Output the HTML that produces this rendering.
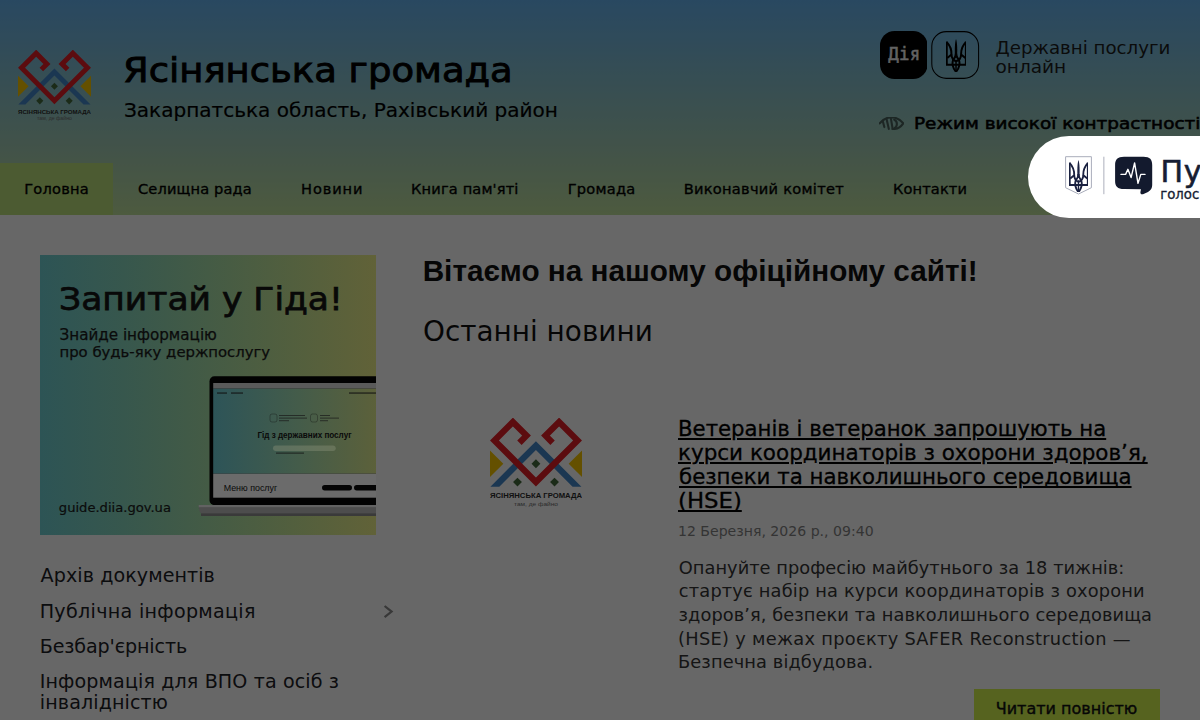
<!DOCTYPE html>
<html lang="uk">
<head>
<meta charset="utf-8">
<title>Ясінянська громада</title>
<style>
*{box-sizing:border-box;margin:0;padding:0}
html,body{width:1200px;height:720px;overflow:hidden;background:#fff}
body{font-family:"DejaVu Sans","Liberation Sans",sans-serif;color:#000;position:relative}
.t{position:absolute;white-space:nowrap}
.a{position:absolute}
#header{left:0;top:0;width:1200px;height:215px;background:linear-gradient(180deg,#66b3ef 0%,#85c0d0 35%,#a4cdb4 70%,#bfe09c 100%)}
#nav-active{left:0;top:163px;width:113px;height:52px;background:#bde27c}
#overlay{left:0;top:0;width:1200px;height:720px;background:rgba(0,0,0,.595);z-index:50}
#pulse{left:1027.5px;top:136px;width:200px;height:82px;border-radius:41px 0 0 41px;background:#fff;z-index:60}
#banner{left:40px;top:255px;width:336px;height:279.5px;background:linear-gradient(90deg,rgb(45,84,85) 0%,rgb(55,87,77) 25%,rgb(68,91,69) 50%,rgb(82,95,62) 75%,rgb(97,98,56) 100%);overflow:hidden;z-index:55}
#btn{left:974px;top:689px;width:186px;height:40px;background:#d4f64e}
.u{text-decoration:underline;text-decoration-thickness:1.7px;text-underline-offset:1.6px}
</style>
</head>
<body>
<svg width="0" height="0" style="position:absolute"><symbol id="tryzub" viewBox="128 85 352 565">
<g fill="none" stroke="currentColor" stroke-width="34" stroke-linejoin="miter" stroke-linecap="butt">
<path d="M141,128 L141,524 L469,524 L469,128"/>
<path d="M141,140 C190,190 226,270 222,352 L150,410"/>
<path d="M469,140 C420,190 384,270 388,352 L460,410"/>
<path d="M222,352 C226,420 258,452 300,468"/>
<path d="M388,352 C384,420 352,452 300,468"/>
<path d="M300,330 C296,388 272,412 250,446 C228,500 244,590 300,646"/>
<path d="M300,330 C304,388 328,412 350,446 C372,500 356,590 300,646"/>
<path d="M300,440 L300,640" stroke-width="26"/>
</g>
<path fill="currentColor" d="M300,85 C278,150 276,260 282,400 L318,400 C324,260 322,150 300,85 Z"/>
</symbol><symbol id="logo" viewBox="0 0 663 645">
<polygon fill="#4488cc" points="331,167 3,495 67,495 331,231 595,495 659,495"/>
<polygon fill="#f7c600" points="0,235 0,425 96,330"/>
<polygon fill="#f7c600" points="663,235 663,425 567,330"/>
<g fill="#446b3c">
<polygon points="331,298 363,330 331,362 299,330"/>
<polygon points="198,430 230,462 198,494 166,462"/>
<polygon points="465,430 497,462 465,494 433,462"/>
</g>
<g fill="none" stroke="#e31e25" stroke-width="45" stroke-linejoin="miter" stroke-miterlimit="4">
<path d="M212,178 L263,127 L165,29 L32,162 L331,461 L631,162 L498,29 L400,127 L451,178"/>
</g>
<text x="331.5" y="580" font-family="Liberation Sans, DejaVu Sans, sans-serif" font-weight="bold" font-size="50" text-anchor="middle" textLength="663" lengthAdjust="spacingAndGlyphs" fill="#2c2c2c">ЯСІНЯНСЬКА ГРОМАДА</text>
<text x="331.5" y="633" font-family="Liberation Sans, DejaVu Sans, sans-serif" font-size="42" text-anchor="middle" textLength="317" lengthAdjust="spacingAndGlyphs" fill="#6e6e6e">там, де файно</text>
</symbol></svg>
<div class="a" id="header"></div>
<div class="a" id="nav-active"></div>
<svg class="a" style="left:18.3px;top:49.9px" width="73" height="71" viewBox="0 0 663 645"><use href="#logo"/></svg>
<div class="t " style="left:123.30px;top:48.23px;font-family:'DejaVu Sans','Liberation Sans',sans-serif;font-size:34.60px;line-height:45px;color:#000;-webkit-text-stroke:0.9px #000;transform-origin:0 0;transform:scaleX(1.0684);">Ясінянська громада</div>
<div class="t " style="left:123.95px;top:97.16px;font-family:'DejaVu Sans','Liberation Sans',sans-serif;font-size:20.05px;line-height:26px;color:#000;-webkit-text-stroke:0.2px #000;">Закарпатська область, Рахівський район</div>
<div class="t nav" style="left:24.23px;top:178.95px;font-family:'DejaVu Sans','Liberation Sans',sans-serif;font-size:14.60px;line-height:19px;color:#000;letter-spacing:0.225px;-webkit-text-stroke:0.35px #000;">Головна</div>
<div class="t nav" style="left:137.92px;top:178.95px;font-family:'DejaVu Sans','Liberation Sans',sans-serif;font-size:14.60px;line-height:19px;color:#000;letter-spacing:0.165px;-webkit-text-stroke:0.35px #000;">Селищна рада</div>
<div class="t nav" style="left:301.10px;top:178.95px;font-family:'DejaVu Sans','Liberation Sans',sans-serif;font-size:14.60px;line-height:19px;color:#000;letter-spacing:0.854px;-webkit-text-stroke:0.35px #000;">Новини</div>
<div class="t nav" style="left:411.10px;top:178.95px;font-family:'DejaVu Sans','Liberation Sans',sans-serif;font-size:14.60px;line-height:19px;color:#000;letter-spacing:0.151px;-webkit-text-stroke:0.35px #000;">Книга пам'яті</div>
<div class="t nav" style="left:567.69px;top:178.95px;font-family:'DejaVu Sans','Liberation Sans',sans-serif;font-size:14.60px;line-height:19px;color:#000;letter-spacing:0.235px;-webkit-text-stroke:0.35px #000;">Громада</div>
<div class="t nav" style="left:683.69px;top:178.95px;font-family:'DejaVu Sans','Liberation Sans',sans-serif;font-size:14.60px;line-height:19px;color:#000;letter-spacing:0.275px;-webkit-text-stroke:0.35px #000;">Виконавчий комітет</div>
<div class="t nav" style="left:893.10px;top:178.95px;font-family:'DejaVu Sans','Liberation Sans',sans-serif;font-size:14.60px;line-height:19px;color:#000;letter-spacing:0.103px;-webkit-text-stroke:0.35px #000;">Контакти</div>
<svg class="a" style="left:879.8px;top:30.8px" width="47.6" height="48" viewBox="0 0 47.6 48"><rect x="0" y="0" width="47.6" height="48" rx="14.5" ry="14.5" fill="#000"/></svg>
<div class="t " style="left:888.24px;top:42.68px;font-family:'DejaVu Sans Mono','Liberation Mono',monospace;font-size:17.40px;line-height:23px;color:#f4f4f4;letter-spacing:0.267px;-webkit-text-stroke:0.45px #f4f4f4;">Дія</div>
<svg class="a" style="left:931.4px;top:30.8px" width="48.4" height="48" viewBox="0 0 48.4 48"><rect x="0.8" y="0.6" width="46.8" height="46.8" rx="14.5" ry="14.5" fill="none" stroke="#000" stroke-width="1.05"/></svg>
<svg class="a" style="left:945.5px;top:39px;color:#000" width="20.5" height="33" viewBox="0 0 352 565" preserveAspectRatio="none"><use href="#tryzub" width="352" height="565"/></svg>
<div class="t " style="left:995.57px;top:35.80px;font-family:'DejaVu Sans','Liberation Sans',sans-serif;font-size:18.22px;line-height:24px;color:#1c1c1c;">Державні послуги</div>
<div class="t " style="left:995.53px;top:55.29px;font-family:'DejaVu Sans','Liberation Sans',sans-serif;font-size:18.51px;line-height:24px;color:#1c1c1c;">онлайн</div>
<svg class="a" style="left:879.04px;top:117.04px" width="24.91" height="12.82" viewBox="195 195 690 355">
<g fill="none" stroke="#000" opacity=".52" stroke-width="58" stroke-linecap="round">
<path d="M215,372 C380,150 700,150 868,372 C800,470 680,535 570,528"/>
<path d="M300,310 L343,475"/><path d="M407,262 L468,525"/><path d="M527,245 L573,528"/>
<path d="M615,270 C715,305 715,465 615,510"/>
</g></svg>
<div class="t " style="left:913.99px;top:113.39px;font-family:'DejaVu Sans','Liberation Sans',sans-serif;font-size:16.20px;line-height:21px;color:#000;-webkit-text-stroke:0.55px #000;transform-origin:0 0;transform:scaleX(1.1368);">Режим високої контрастності</div>
<div class="a" id="banner"></div>
<div class="t " style="left:59.12px;top:277.66px;font-family:'DejaVu Sans','Liberation Sans',sans-serif;font-size:32.20px;line-height:42px;color:#080808;-webkit-text-stroke:0.75px #080808;z-index:56;transform-origin:0 0;transform:scaleX(1.0723);">Запитай у Гіда!</div>
<div class="t " style="left:59.51px;top:324.75px;font-family:'DejaVu Sans','Liberation Sans',sans-serif;font-size:15.17px;line-height:20px;color:#0b0b0b;-webkit-text-stroke:0.25px #0b0b0b;z-index:56;">Знайде інформацію</div>
<div class="t " style="left:59.49px;top:343.16px;font-family:'DejaVu Sans','Liberation Sans',sans-serif;font-size:14.85px;line-height:19px;color:#0b0b0b;-webkit-text-stroke:0.25px #0b0b0b;z-index:56;">про будь-яку держпослугу</div>
<div class="t " style="left:58.85px;top:498.67px;font-family:'DejaVu Sans','Liberation Sans',sans-serif;font-size:13.10px;line-height:17px;color:#0b0b0b;-webkit-text-stroke:0.2px #0b0b0b;z-index:56;">guide.diia.gov.ua</div>
<svg class="a" style="left:196px;top:374px;z-index:56" width="180" height="146" viewBox="196 374 180 146">
<defs><linearGradient id="scr" x1="0" x2="1" y1="0" y2="0"><stop offset="0" stop-color="rgb(45,84,88)"/><stop offset="0.5" stop-color="rgb(68,92,74)"/><stop offset="1" stop-color="rgb(94,97,57)"/></linearGradient></defs>
<rect x="209.5" y="376.2" width="200" height="129" rx="5" fill="#020202"/>
<rect x="213.2" y="383" width="170" height="5.7" fill="#5a5a5a"/>
<rect x="213.2" y="388.7" width="170" height="85" fill="url(#scr)"/>
<rect x="213.2" y="473.7" width="170" height="24" fill="#6b6b6b"/>
<rect x="273" y="445.5" width="62.7" height="5.5" rx="2.75" fill="#8a927a" opacity=".42"/>
<rect x="322" y="485" width="30" height="5.5" rx="2.75" fill="#050505"/>
<rect x="354" y="485" width="30" height="5.5" rx="2.75" fill="#050505"/>
<rect x="217" y="392.4" width="10" height="1.3" fill="#111" opacity=".8"/><rect x="231" y="392.4" width="12" height="1.3" fill="#111" opacity=".8"/>
<rect x="349" y="392.4" width="27" height="1.3" fill="#111" opacity=".8"/>
<rect x="270" y="414" width="7" height="8" rx="2" fill="none" stroke="#111" stroke-width=".5" opacity=".7"/>
<rect x="279" y="415" width="26" height="1" fill="#1a1a1a" opacity=".7"/><rect x="279" y="417.6" width="28" height="1" fill="#1a1a1a" opacity=".7"/><rect x="279" y="420.2" width="10" height="1" fill="#1a1a1a" opacity=".7"/>
<rect x="310.5" y="414" width="7" height="8" rx="2" fill="none" stroke="#111" stroke-width=".5" opacity=".7"/>
<rect x="320" y="415" width="10" height="1" fill="#1a1a1a" opacity=".7"/><rect x="320" y="417.6" width="19" height="1" fill="#1a1a1a" opacity=".7"/><rect x="320" y="420.2" width="8" height="1" fill="#1a1a1a" opacity=".7"/>
<rect x="276" y="452.6" width="28" height="1" fill="#111" opacity=".8"/>
<path d="M198.7,505 L376,505 L376,516 L206,516 C201,516 198.7,511 198.7,505 Z" fill="#4d4d4d"/>
<rect x="198.7" y="505" width="178" height="2.2" fill="#626262"/>
<rect x="201" y="513.4" width="176" height="2.6" fill="#3a3a3a"/>
<text x="257.5" y="438" font-family="Liberation Sans, sans-serif" font-weight="bold" font-size="8.6" textLength="94" lengthAdjust="spacingAndGlyphs" fill="#0a0a0a">Гід з державних послуг</text>
<text x="223.7" y="491" font-family="Liberation Sans, sans-serif" font-size="9.6" textLength="53.5" lengthAdjust="spacingAndGlyphs" fill="#0a0a0a">Меню послуг</text>
</svg>
<div class="t " style="left:40.59px;top:562.89px;font-family:'DejaVu Sans','Liberation Sans',sans-serif;font-size:19.10px;line-height:25px;color:#1d2125;letter-spacing:0.077px;">Архів документів</div>
<div class="t " style="left:39.71px;top:598.59px;font-family:'DejaVu Sans','Liberation Sans',sans-serif;font-size:19.10px;line-height:25px;color:#1d2125;letter-spacing:0.301px;">Публічна інформація</div>
<div class="t " style="left:39.71px;top:633.99px;font-family:'DejaVu Sans','Liberation Sans',sans-serif;font-size:19.10px;line-height:25px;color:#1d2125;letter-spacing:-0.127px;">Безбар'єрність</div>
<div class="t " style="left:39.71px;top:669.49px;font-family:'DejaVu Sans','Liberation Sans',sans-serif;font-size:19.10px;line-height:25px;color:#1d2125;letter-spacing:0.119px;">Інформація для ВПО та осіб з</div>
<div class="t " style="left:39.81px;top:690.29px;font-family:'DejaVu Sans','Liberation Sans',sans-serif;font-size:19.10px;line-height:25px;color:#1d2125;letter-spacing:0.099px;">інвалідністю</div>
<svg class="a" style="left:382px;top:604px" width="12" height="15" viewBox="0 0 12 15"><path d="M2.6,2 L9.6,7.6 L2.6,13.2" fill="none" stroke="#8a8a8a" stroke-width="2.2"/></svg>
<div class="t " style="left:422.67px;top:251.20px;font-family:'Liberation Sans','DejaVu Sans',sans-serif;font-size:29.73px;line-height:39px;color:#111;font-weight:bold;">Вітаємо на нашому офіційному сайті!</div>
<div class="t " style="left:422.97px;top:313.85px;font-family:'DejaVu Sans','Liberation Sans',sans-serif;font-size:27.89px;line-height:36px;color:#111;">Останні новини</div>
<svg class="a" style="left:490px;top:417.6px" width="92" height="89.5" viewBox="0 0 663 645"><use href="#logo"/></svg>
<div class="t u" style="left:678.10px;top:415.74px;font-family:'DejaVu Sans','Liberation Sans',sans-serif;font-size:20.40px;line-height:27px;color:#000;-webkit-text-stroke:0.3px #000;transform-origin:0 0;transform:scaleX(1.0412);">Ветеранів і ветеранок запрошують на</div>
<div class="t u" style="left:678.16px;top:440.24px;font-family:'DejaVu Sans','Liberation Sans',sans-serif;font-size:20.40px;line-height:27px;color:#000;-webkit-text-stroke:0.3px #000;transform-origin:0 0;transform:scaleX(1.0530);">курси координаторів з охорони здоров’я,</div>
<div class="t u" style="left:679.03px;top:464.44px;font-family:'DejaVu Sans','Liberation Sans',sans-serif;font-size:20.40px;line-height:27px;color:#000;-webkit-text-stroke:0.3px #000;transform-origin:0 0;transform:scaleX(1.0461);">безпеки та навколишнього середовища</div>
<div class="t u" style="left:678.05px;top:488.44px;font-family:'DejaVu Sans','Liberation Sans',sans-serif;font-size:20.40px;line-height:27px;color:#000;-webkit-text-stroke:0.3px #000;transform-origin:0 0;transform:scaleX(1.1176);">(HSE)</div>
<div class="t " style="left:677.96px;top:522.32px;font-family:'DejaVu Sans','Liberation Sans',sans-serif;font-size:14.09px;line-height:18px;color:#828282;">12 Березня, 2026 р., 09:40</div>
<div class="t " style="left:678.85px;top:555.64px;font-family:'DejaVu Sans','Liberation Sans',sans-serif;font-size:17.80px;line-height:23px;color:#343434;letter-spacing:0.028px;">Опануйте професію майбутнього за 18 тижнів:</div>
<div class="t " style="left:678.85px;top:579.34px;font-family:'DejaVu Sans','Liberation Sans',sans-serif;font-size:17.80px;line-height:23px;color:#343434;letter-spacing:0.170px;">стартує набір на курси координаторів з охорони</div>
<div class="t " style="left:678.60px;top:603.14px;font-family:'DejaVu Sans','Liberation Sans',sans-serif;font-size:17.80px;line-height:23px;color:#343434;letter-spacing:0.072px;">здоров’я, безпеки та навколишнього середовища</div>
<div class="t " style="left:677.98px;top:626.54px;font-family:'DejaVu Sans','Liberation Sans',sans-serif;font-size:17.80px;line-height:23px;color:#343434;letter-spacing:0.300px;">(HSE) у межах проєкту SAFER Reconstruction —</div>
<div class="t " style="left:677.96px;top:650.34px;font-family:'DejaVu Sans','Liberation Sans',sans-serif;font-size:17.80px;line-height:23px;color:#343434;letter-spacing:0.114px;">Безпечна відбудова.</div>
<div class="a" id="btn"></div>
<div class="t " style="left:995.75px;top:697.76px;font-family:'DejaVu Sans','Liberation Sans',sans-serif;font-size:16.01px;line-height:21px;color:#111;-webkit-text-stroke:0.4px #111;">Читати повністю</div>
<div class="a" id="overlay"></div>
<div class="a" id="pulse"></div>
<svg class="a" style="left:1060px;top:150px;z-index:61" width="100" height="50" viewBox="1060 150 100 50">
<path d="M1065.6,156.7 L1091.4,156.7 L1091.4,187.7 L1078.5,194 L1065.6,187.7 Z" fill="none" stroke="#a9adbb" stroke-width="1"/>
<rect x="1103.3" y="156.7" width="1.1" height="37.5" fill="#b4b7c2"/>
<path d="M1124,156.7 L1143.5,156.7 C1150,156.7 1152.2,159.5 1152.2,165 L1152.2,185 C1152.2,188 1151,190 1148,192 L1143,194.2 C1141,194.8 1140,193.5 1140.5,191.5 L1141,189.3 L1124,189 C1117.5,189 1115.1,186.5 1115.1,181 L1115.1,165 C1115.1,159.5 1117.5,156.7 1124,156.7 Z" fill="#131a2e"/>
<path d="M1121,174.4 L1125.6,174.4 L1127.9,169.3 L1131.1,177.6 L1134.6,162.9 L1138,183.3 L1140.8,174.4 L1145,174.4" fill="none" stroke="#fff" stroke-width="1.4" stroke-linejoin="round" stroke-linecap="round"/>
</svg>
<svg class="a" style="left:1068.8px;top:159.5px;z-index:62;color:#1a2140" width="19.4" height="32.3" viewBox="0 0 352 565" preserveAspectRatio="none"><use href="#tryzub" width="352" height="565"/></svg>
<div class="t " style="left:1160.40px;top:152.12px;font-family:'DejaVu Sans','Liberation Sans',sans-serif;font-size:30.00px;line-height:39px;color:#161d33;letter-spacing:0.800px;-webkit-text-stroke:0.6px #161d33;z-index:62;">Пульс</div>
<div class="t " style="left:1160.20px;top:185.60px;font-family:'DejaVu Sans','Liberation Sans',sans-serif;font-size:13.30px;line-height:17px;color:#161d33;-webkit-text-stroke:0.3px #161d33;z-index:62;">голос громади</div>
</body>
</html>
